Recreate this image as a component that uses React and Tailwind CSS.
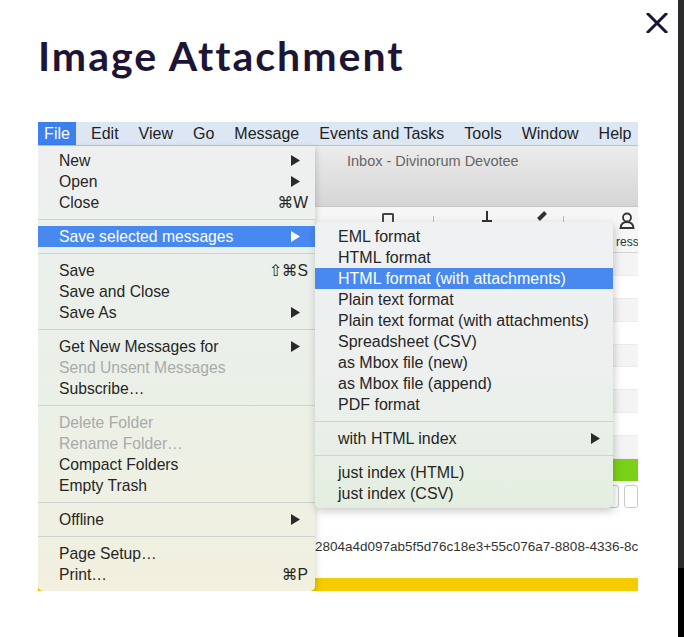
import { useState } from 'react';

const MENU_FONT = { fontFamily: '"Liberation Sans", "DejaVu Sans", Arial, sans-serif' };

const FILE_ITEMS = [
  { label: 'New', arrow: true },
  { label: 'Open', arrow: true },
  { label: 'Close', shortcut: '⌘W' },
  { sep: true },
  { label: 'Save selected messages', arrow: true, active: true },
  { sep: true },
  { label: 'Save', shortcut: '⇧⌘S' },
  { label: 'Save and Close' },
  { label: 'Save As', arrow: true },
  { sep: true },
  { label: 'Get New Messages for', arrow: true },
  { label: 'Send Unsent Messages', disabled: true },
  { label: 'Subscribe…' },
  { sep: true },
  { label: 'Delete Folder', disabled: true },
  { label: 'Rename Folder…', disabled: true },
  { label: 'Compact Folders' },
  { label: 'Empty Trash' },
  { sep: true },
  { label: 'Offline', arrow: true },
  { sep: true },
  { label: 'Page Setup…' },
  { label: 'Print…', shortcut: '⌘P' },
];

const SAVE_ITEMS = [
  { label: 'EML format' },
  { label: 'HTML format' },
  { label: 'HTML format (with attachments)', active: true },
  { label: 'Plain text format' },
  { label: 'Plain text format (with attachments)' },
  { label: 'Spreadsheet (CSV)' },
  { label: 'as Mbox file (new)' },
  { label: 'as Mbox file (append)' },
  { label: 'PDF format' },
  { sep: true },
  { label: 'with HTML index', arrow: true },
  { sep: true },
  { label: 'just index (HTML)' },
  { label: 'just index (CSV)' },
];

const MENUBAR = ['Edit', 'View', 'Go', 'Message', 'Events and Tasks', 'Tools', 'Window', 'Help'];

function Arrow({ light }) {
  return (
    <svg width="9" height="11" viewBox="0 0 9 11" className="shrink-0">
      <path d="M0 0 L9 5.5 L0 11 Z" fill={light ? '#ffffff' : '#2a2a2a'} />
    </svg>
  );
}

function MenuList({ items, padLeft, arrowPad, shortcutPad, size }) {
  return items.map((item, i) => {
    if (item.sep) {
      return (
        <div key={i} className="flex h-[13px] items-center">
          <div className="h-px w-full bg-[#cfd2d2]" />
        </div>
      );
    }
    const color = item.active ? 'text-white' : item.disabled ? 'text-[#a9abab]' : 'text-[#262626]';
    return (
      <div
        key={i}
        className={`flex h-[21px] items-center justify-between ${color} ${item.active ? 'bg-[#4889ef]' : ''}`}
        style={{ paddingLeft: padLeft, paddingRight: item.arrow ? arrowPad : shortcutPad, fontSize: size }}
      >
        <span className="whitespace-nowrap">{item.label}</span>
        {item.arrow && <Arrow light={item.active} />}
        {item.shortcut && <span className="whitespace-nowrap">{item.shortcut}</span>}
      </div>
    );
  });
}

function Screenshot() {
  return (
    <div className="relative h-[469px] w-[600px] overflow-hidden bg-white" style={MENU_FONT}>
      {/* menu bar */}
      <div className="flex h-[24px] items-center border-b border-[#b9c4d0] bg-[#dde7f3] text-[16px] text-[#222]">
        <div className="flex h-full w-[38px] items-center justify-center bg-[#3c80ef] text-white">File</div>
        <div className="flex items-center gap-[20px] pl-[15px]">
          {MENUBAR.map((m) => (
            <span key={m} className="whitespace-nowrap">{m}</span>
          ))}
        </div>
      </div>

      {/* window behind the menus */}
      <div className="flex flex-col">
        <div className="h-[60px] bg-gradient-to-b from-[#ececec] to-[#d5d5d5] pl-[309px] pt-[5px] text-[14.5px] text-[#666]">
          Inbox - Divinorum Devotee
        </div>
        <div className="relative h-[46px] border-t border-[#c6c6c6] bg-[#f6f6f6]">
          <div className="absolute left-[344px] top-[6px] h-[10px] w-[12px] rounded-[2px] border-2 border-b-0 border-[#444]" />
          <div className="absolute left-[395px] top-[9px] h-[12px] w-px bg-[#bbb]" />
          <div className="absolute left-[448px] top-[4px] h-[10px] w-[2px] bg-[#333]" />
          <div className="absolute left-[444px] top-[13px] h-[2px] w-[10px] bg-[#333]" />
          <div className="absolute left-[502px] top-[4px] h-[10px] w-[4px] rotate-45 bg-[#333]" />
          <div className="absolute left-[525px] top-[9px] h-[12px] w-px bg-[#bbb]" />
          <svg className="absolute left-[581px] top-[5px]" width="16" height="17" viewBox="0 0 16 17">
            <circle cx="8" cy="5.5" r="4" fill="none" stroke="#333" strokeWidth="1.8" />
            <path d="M1.5 16 C2 11.5 5 10 8 10 C11 10 14 11.5 14.5 16 Z" fill="none" stroke="#333" strokeWidth="1.8" />
          </svg>
          <span className="absolute left-[578px] top-[26px] text-[12px] text-[#333]">ress</span>
        </div>
        <div className="flex h-[207px] flex-col border-t border-[#d4d4d4]">
          {Array.from({ length: 9 }).map((_, i) => (
            <div
              key={i}
              className={`h-[23px] border-b border-[#ececec] ${i % 2 === 0 ? 'bg-[#f4f4f4]' : 'bg-white'}`}
            />
          ))}
        </div>
        <div className="h-[22px] bg-[#7ad117]" />
        <div className="flex h-[28px] items-center gap-[5px] pl-[545px] pt-[3px]">
          <div className="flex h-[23px] w-[46px] items-center justify-end rounded-[3px] border border-[#c9c9c9] bg-white pr-[10px] text-[13px] text-[#333]">
            ly
          </div>
          <div className="h-[23px] w-[20px] rounded-[3px] border border-[#c9c9c9] bg-white" />
        </div>
        <div className="h-[69px] bg-white pl-[274px] pt-[28px] text-[13.5px] whitespace-nowrap text-[#333]">
          l2804a4d097ab5f5d76c18e3+55c076a7-8808-4336-8c
        </div>
        <div className="h-[14px] bg-[#f4cc00]" />
      </div>

      {/* File menu */}
      <div className="absolute left-0 top-[24px] flex h-[445px] w-[277px] flex-col rounded-b-[5px] bg-gradient-to-b from-[#eef0f0] via-[#eaf0e8] to-[#f2f0df] pt-[4px] shadow-[1px_2px_6px_rgba(0,0,0,0.18)]">
        <MenuList items={FILE_ITEMS} padLeft={21} arrowPad={15} shortcutPad={7} size="15.7px" />
      </div>

      {/* Save selected messages submenu */}
      <div className="absolute left-[277px] top-[100px] flex h-[286px] w-[298px] flex-col rounded-[5px] bg-gradient-to-b from-[#eff1f2] via-[#edf0ef] to-[#e4eee0] pt-[4px] shadow-[1px_3px_8px_rgba(0,0,0,0.22)]">
        <MenuList items={SAVE_ITEMS} padLeft={23} arrowPad={13} shortcutPad={13} size="16px" />
      </div>
    </div>
  );
}

export default function App() {
  const [open, setOpen] = useState(true);

  return (
    <div className="flex h-[637px] w-[684px] overflow-hidden bg-white">
      <div className="relative flex-1">
        {open && (
          <>
            <button
              type="button"
              onClick={() => setOpen(false)}
              aria-label="Close"
              className="absolute right-[10px] top-[13px] cursor-pointer"
            >
              <svg width="22" height="20" viewBox="0 0 22 20">
                <path d="M2 1 L20 19 M20 1 L2 19" stroke="#1c1433" strokeWidth="3" strokeLinecap="square" />
              </svg>
            </button>
            <div className="pl-[38px] pt-[31px]">
              <h1
                className="text-[41px] font-bold leading-[50px] tracking-[2px] text-[#1d1535]"
                style={{ fontFamily: 'Lato, "Open Sans", sans-serif' }}
              >
                Image Attachment
              </h1>
              <div className="mt-[41px]">
                <Screenshot />
              </div>
            </div>
          </>
        )}
      </div>
      <div className="flex w-[6px] flex-col">
        <div className="h-[568px] bg-[#2b2b2b]" />
        <div className="flex-1 bg-black" />
      </div>
    </div>
  );
}
